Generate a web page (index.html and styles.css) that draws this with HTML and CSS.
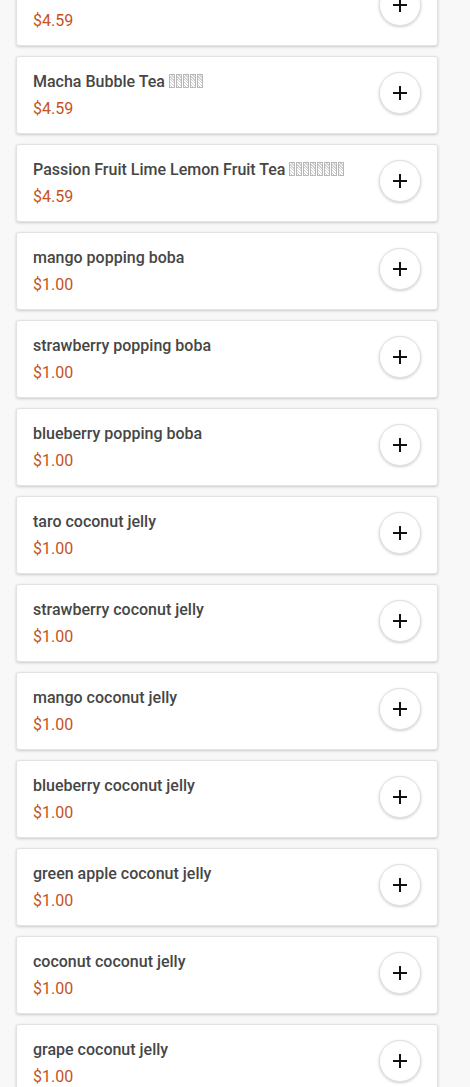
FILE: index.html
```html
<!DOCTYPE html>
<html lang="en">
<head>
  <meta charset="UTF-8" />
  <meta name="viewport" content="width=device-width, initial-scale=1.0"/>
  <title>Menu</title>
  <link rel="stylesheet" href="styles.css">
</head>
<body>
  <div class="menu-list">

    <div class="menu-item">
      <div class="item-info">
        <div class="item-name">Taro Bubble Tea <span class="tofu"></span><span class="tofu"></span><span class="tofu"></span><span class="tofu"></span></div>
        <div class="item-price">$4.59</div>
      </div>
      <button class="add-btn"><svg viewBox="0 0 24 24"><path d="M12 5v14M5 12h14"/></svg></button>
    </div>

    <div class="menu-item">
      <div class="item-info">
        <div class="item-name">Macha Bubble Tea <span class="tofu"></span><span class="tofu"></span><span class="tofu"></span><span class="tofu"></span><span class="tofu"></span></div>
        <div class="item-price">$4.59</div>
      </div>
      <button class="add-btn"><svg viewBox="0 0 24 24"><path d="M12 5v14M5 12h14"/></svg></button>
    </div>

    <div class="menu-item">
      <div class="item-info">
        <div class="item-name">Passion Fruit Lime Lemon Fruit Tea <span class="tofu"></span><span class="tofu"></span><span class="tofu"></span><span class="tofu"></span><span class="tofu"></span><span class="tofu"></span><span class="tofu"></span><span class="tofu"></span></div>
        <div class="item-price">$4.59</div>
      </div>
      <button class="add-btn"><svg viewBox="0 0 24 24"><path d="M12 5v14M5 12h14"/></svg></button>
    </div>

    <div class="menu-item">
      <div class="item-info">
        <div class="item-name">mango popping boba</div>
        <div class="item-price">$1.00</div>
      </div>
      <button class="add-btn"><svg viewBox="0 0 24 24"><path d="M12 5v14M5 12h14"/></svg></button>
    </div>

    <div class="menu-item">
      <div class="item-info">
        <div class="item-name">strawberry popping boba</div>
        <div class="item-price">$1.00</div>
      </div>
      <button class="add-btn"><svg viewBox="0 0 24 24"><path d="M12 5v14M5 12h14"/></svg></button>
    </div>

    <div class="menu-item">
      <div class="item-info">
        <div class="item-name">blueberry popping boba</div>
        <div class="item-price">$1.00</div>
      </div>
      <button class="add-btn"><svg viewBox="0 0 24 24"><path d="M12 5v14M5 12h14"/></svg></button>
    </div>

    <div class="menu-item">
      <div class="item-info">
        <div class="item-name">taro coconut jelly</div>
        <div class="item-price">$1.00</div>
      </div>
      <button class="add-btn"><svg viewBox="0 0 24 24"><path d="M12 5v14M5 12h14"/></svg></button>
    </div>

    <div class="menu-item">
      <div class="item-info">
        <div class="item-name">strawberry coconut jelly</div>
        <div class="item-price">$1.00</div>
      </div>
      <button class="add-btn"><svg viewBox="0 0 24 24"><path d="M12 5v14M5 12h14"/></svg></button>
    </div>

    <div class="menu-item">
      <div class="item-info">
        <div class="item-name">mango coconut jelly</div>
        <div class="item-price">$1.00</div>
      </div>
      <button class="add-btn"><svg viewBox="0 0 24 24"><path d="M12 5v14M5 12h14"/></svg></button>
    </div>

    <div class="menu-item">
      <div class="item-info">
        <div class="item-name">blueberry coconut jelly</div>
        <div class="item-price">$1.00</div>
      </div>
      <button class="add-btn"><svg viewBox="0 0 24 24"><path d="M12 5v14M5 12h14"/></svg></button>
    </div>

    <div class="menu-item">
      <div class="item-info">
        <div class="item-name">green apple coconut jelly</div>
        <div class="item-price">$1.00</div>
      </div>
      <button class="add-btn"><svg viewBox="0 0 24 24"><path d="M12 5v14M5 12h14"/></svg></button>
    </div>

    <div class="menu-item">
      <div class="item-info">
        <div class="item-name">coconut coconut jelly</div>
        <div class="item-price">$1.00</div>
      </div>
      <button class="add-btn"><svg viewBox="0 0 24 24"><path d="M12 5v14M5 12h14"/></svg></button>
    </div>

    <div class="menu-item">
      <div class="item-info">
        <div class="item-name">grape coconut jelly</div>
        <div class="item-price">$1.00</div>
      </div>
      <button class="add-btn"><svg viewBox="0 0 24 24"><path d="M12 5v14M5 12h14"/></svg></button>
    </div>

  </div>
</body>
</html>
```

FILE: styles.css
```css
body {
  font-family: Roboto, 'Noto Sans', sans-serif;
  margin: 0;
  padding: 0;
  background-color: #f8f8f8;
  overflow: hidden;
}

.menu-list {
  display: flex;
  flex-direction: column;
  gap: 10px;
  width: 422px;
  margin: -32px 0 0 16px;
}

.menu-item {
  display: flex;
  align-items: center;
  justify-content: space-between;
  height: 78px;
  box-sizing: border-box;
  padding: 0 16px 4px 16px;
  background-color: #fff;
  border: 1px solid #e2e2e2;
  border-radius: 3px;
  box-shadow: 0 1px 3px rgba(0, 0, 0, 0.18);
}

.item-info {
  display: flex;
  flex-direction: column;
  gap: 7px;
  padding-top: 4px;
}

.item-name {
  font-size: 16px;
  font-weight: 500;
  line-height: 20px;
  color: #464646;
}

.item-price {
  font-size: 16px;
  line-height: 20px;
  color: #c5531f;
}

.tofu {
  display: inline-block;
  width: 4px;
  height: 12px;
  margin-right: 1px;
  vertical-align: -1px;
  border: 1px solid #b8b8b8;
  background: repeating-linear-gradient(45deg, #fff 0, #fff 1px, #cfcfcf 1px, #cfcfcf 2px);
}

.add-btn {
  width: 42px;
  height: 42px;
  padding: 0;
  border: 1px solid #e0e0e0;
  border-radius: 50%;
  background-color: #fff;
  box-shadow: 0 1px 3px rgba(0, 0, 0, 0.2);
  display: flex;
  align-items: center;
  justify-content: center;
  cursor: pointer;
}

.add-btn svg {
  width: 24px;
  height: 24px;
  fill: none;
  stroke: #111;
  stroke-width: 2;
}
```
